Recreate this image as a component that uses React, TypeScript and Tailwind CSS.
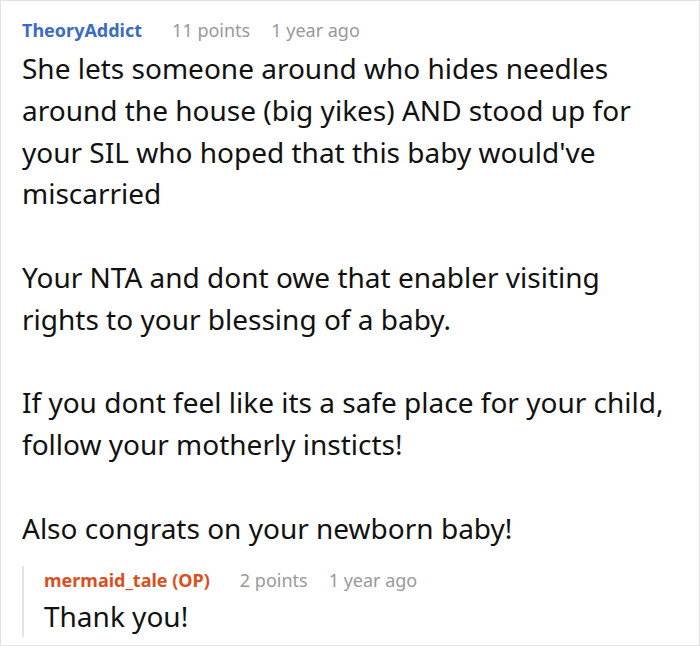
export default function App() {
  return (
    <div className="w-[700px] h-[646px] border border-[#e2e2e2] bg-white pl-[21px] pt-[15px] font-['Noto_Sans',sans-serif] text-[#111]">
      <div className="flex items-baseline text-[18px] leading-[28px]">
        <span className="font-bold text-[#3b6cbf]">TheoryAddict</span>
        <span className="ml-[30px] text-[#999]">11 points</span>
        <span className="ml-[21px] text-[#999]">1 year ago</span>
      </div>
      <p className="mt-[4px] w-[646px] text-[28px] leading-[41.8px] whitespace-pre-line">
        {`She lets someone around who hides needles around the house (big yikes) AND stood up for your SIL who hoped that this baby would've miscarried

Your NTA and dont owe that enabler visiting rights to your blessing of a baby.

If you dont feel like its a safe place for your child, follow your motherly insticts!

Also congrats on your newborn baby!`}
      </p>
      <div className="mt-[16px] border-l-2 border-[#e4e4e4] pl-[20px]">
        <div className="flex items-baseline text-[18px] leading-[28px]">
          <span className="font-bold text-[#d9501e]">mermaid_tale (OP)</span>
          <span className="ml-[30px] text-[#999]">2 points</span>
          <span className="ml-[21px] text-[#999]">1 year ago</span>
        </div>
        <p className="mt-[1px] text-[28px] leading-[42px]">Thank you!</p>
      </div>
    </div>
  )
}
